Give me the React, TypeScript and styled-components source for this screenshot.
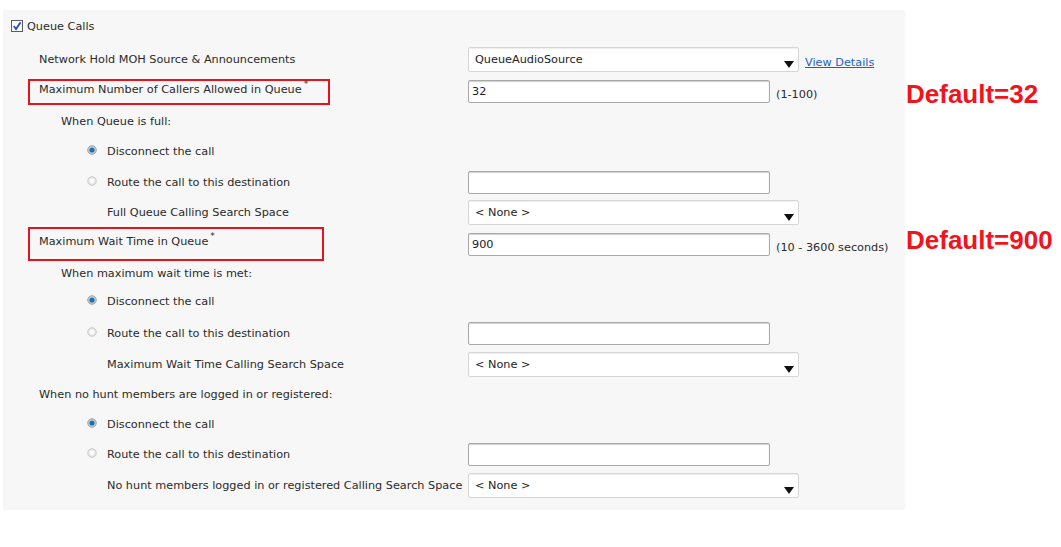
import React from 'react';
import styled, { createGlobalStyle, css } from 'styled-components';

const GlobalStyle = createGlobalStyle`
  html, body {
    margin: 0;
    padding: 0;
    background: #ffffff;
  }
  body {
    font-family: "DejaVu Sans", Tahoma, sans-serif;
    font-size: 11.25px;
    color: #2a2a2a;
  }
`;

const Page = styled.div`
  width: 1061px;
  height: 547px;
  padding: 10px 0 0 3px;
  box-sizing: border-box;
`;

const Panel = styled.div`
  width: 902px;
  background: #f7f7f7;
  padding-bottom: 8px;
`;

const Row = styled.div<{ $h: number }>`
  display: grid;
  grid-template-columns: 465px 437px 150px;
  align-items: center;
  height: ${p => p.$h}px;
`;

const LabelCell = styled.div<{ $indent: number }>`
  display: flex;
  align-items: center;
  padding-left: ${p => p.$indent}px;
  white-space: nowrap;
`;

const Controls = styled.div`
  display: flex;
  align-items: center;
  gap: 6px;
  white-space: nowrap;
`;

const Required = styled.div<{ $w: number; $h: number; $top: number }>`
  display: flex;
  align-items: flex-start;
  box-sizing: border-box;
  width: ${p => p.$w}px;
  height: ${p => p.$h}px;
  margin-left: -11px;
  padding: ${p => p.$top}px 9px 0;
  border: 2px solid #e3141b;
`;

const Star = styled.span`
  font-size: 9px;
  margin-left: 2px;
  position: relative;
  top: -4px;
`;

const CheckBox = styled.span`
  display: inline-flex;
  width: 12px;
  height: 12px;
  box-sizing: border-box;
  border: 1px solid #5a5a6a;
  background: #fff;
  margin-right: 4px;
`;

const Radio = styled.span`
  display: inline-flex;
  width: 10px;
  height: 10px;
  margin: 0 10px 3px -20px;
`;

const Select = styled.div<{ $w?: number }>`
  position: relative;
  display: flex;
  align-items: center;
  box-sizing: border-box;
  width: ${p => p.$w ?? 331}px;
  height: 25px;
  padding-left: 6px;
  background: #ffffff;
  border: 1px solid #d6d6d6;
  border-radius: 2px;
  box-shadow: inset 0 1px 0 #efefef;
  color: #222;
`;

const Arrow = styled.span`
  position: absolute;
  right: 4px;
  bottom: 3px;
  width: 0;
  height: 0;
  border-left: 5px solid transparent;
  border-right: 5px solid transparent;
  border-top: 7px solid #111;
`;

const TextInput = styled.div`
  display: flex;
  align-items: center;
  box-sizing: border-box;
  width: 302px;
  height: 23px;
  padding-left: 3px;
  background: #ffffff;
  border: 1px solid #a8a8a8;
  border-radius: 2px;
  box-shadow: inset 0 1px 1px #d0d0d0;
  color: #222;
`;

const Hint = styled.span<{ $down?: number }>`
  ${p =>
    p.$down &&
    css`
      margin-top: ${p.$down}px;
    `}
`;

const Link = styled.a`
  color: #1f5fc4;
  text-decoration: underline;
  margin-top: 6px;
`;

const Note = styled.div<{ $dy: number }>`
  font-family: "Liberation Sans", Arial, sans-serif;
  font-weight: bold;
  font-size: 26px;
  color: #f0141c;
  margin-left: 1px;
  position: relative;
  top: ${p => p.$dy}px;
`;

const Checkmark = () => (
  <svg width="10" height="10" viewBox="0 0 10 10">
    <path d="M1.8 5 L4 8 L8.6 1.2" fill="none" stroke="#2a4fb8" strokeWidth="1.9" />
  </svg>
);

const RadioIcon = ({ checked }: { checked: boolean }) => (
  <svg width="10" height="10" viewBox="0 0 10 10">
    <circle cx="5" cy="5" r="4.2" fill={checked ? '#d3d9de' : '#ececec'} stroke={checked ? '#8e98a2' : '#bfc4c8'} strokeWidth="1" />
    {checked && <circle cx="5" cy="5" r="2.6" fill="#1f6fb0" />}
    {!checked && <circle cx="5" cy="5" r="2.3" fill="#fafafa" />}
  </svg>
);

const Option = ({ checked, children }: { checked: boolean; children: React.ReactNode }) => (
  <>
    <Radio>
      <RadioIcon checked={checked} />
    </Radio>
    {children}
  </>
);

export default function App() {
  return (
    <>
      <GlobalStyle />
      <Page>
        <Panel>
          <Row $h={32}>
            <LabelCell $indent={8}>
              <CheckBox>
                <Checkmark />
              </CheckBox>
              Queue Calls
            </LabelCell>
          </Row>
          <Row $h={34}>
            <LabelCell $indent={36}>Network Hold MOH Source &amp; Announcements</LabelCell>
            <Controls>
              <Select>
                QueueAudioSource
                <Arrow />
              </Select>
              <Link href="#">View Details</Link>
            </Controls>
          </Row>
          <Row $h={30}>
            <LabelCell $indent={36}>
              <Required $w={302} $h={26} $top={2}>
                Maximum Number of Callers Allowed in Queue<Star>*</Star>
              </Required>
            </LabelCell>
            <Controls>
              <TextInput>32</TextInput>
              <Hint $down={6}>(1-100)</Hint>
            </Controls>
            <Note $dy={3}>Default=32</Note>
          </Row>
          <Row $h={30}>
            <LabelCell $indent={58}>When Queue is full:</LabelCell>
          </Row>
          <Row $h={30}>
            <LabelCell $indent={104}>
              <Option checked>Disconnect the call</Option>
            </LabelCell>
          </Row>
          <Row $h={32}>
            <LabelCell $indent={104}>
              <Option checked={false}>Route the call to this destination</Option>
            </LabelCell>
            <Controls>
              <TextInput />
            </Controls>
          </Row>
          <Row $h={28}>
            <LabelCell $indent={104}>Full Queue Calling Search Space</LabelCell>
            <Controls>
              <Select>
                &lt; None &gt;
                <Arrow />
              </Select>
            </Controls>
          </Row>
          <Row $h={36}>
            <LabelCell $indent={36}>
              <Required $w={296} $h={34} $top={6}>
                Maximum Wait Time in Queue<Star>*</Star>
              </Required>
            </LabelCell>
            <Controls>
              <TextInput>900</TextInput>
              <Hint $down={6}>(10 - 3600 seconds)</Hint>
            </Controls>
            <Note $dy={-4}>Default=900</Note>
          </Row>
          <Row $h={22}>
            <LabelCell $indent={58}>When maximum wait time is met:</LabelCell>
          </Row>
          <Row $h={34}>
            <LabelCell $indent={104}>
              <Option checked>Disconnect the call</Option>
            </LabelCell>
          </Row>
          <Row $h={30}>
            <LabelCell $indent={104}>
              <Option checked={false}>Route the call to this destination</Option>
            </LabelCell>
            <Controls>
              <TextInput />
            </Controls>
          </Row>
          <Row $h={32}>
            <LabelCell $indent={104}>Maximum Wait Time Calling Search Space</LabelCell>
            <Controls>
              <Select>
                &lt; None &gt;
                <Arrow />
              </Select>
            </Controls>
          </Row>
          <Row $h={28}>
            <LabelCell $indent={36}>When no hunt members are logged in or registered:</LabelCell>
          </Row>
          <Row $h={32}>
            <LabelCell $indent={104}>
              <Option checked>Disconnect the call</Option>
            </LabelCell>
          </Row>
          <Row $h={28}>
            <LabelCell $indent={104}>
              <Option checked={false}>Route the call to this destination</Option>
            </LabelCell>
            <Controls>
              <TextInput />
            </Controls>
          </Row>
          <Row $h={34}>
            <LabelCell $indent={104}>No hunt members logged in or registered Calling Search Space</LabelCell>
            <Controls>
              <Select>
                &lt; None &gt;
                <Arrow />
              </Select>
            </Controls>
          </Row>
        </Panel>
      </Page>
    </>
  );
}
